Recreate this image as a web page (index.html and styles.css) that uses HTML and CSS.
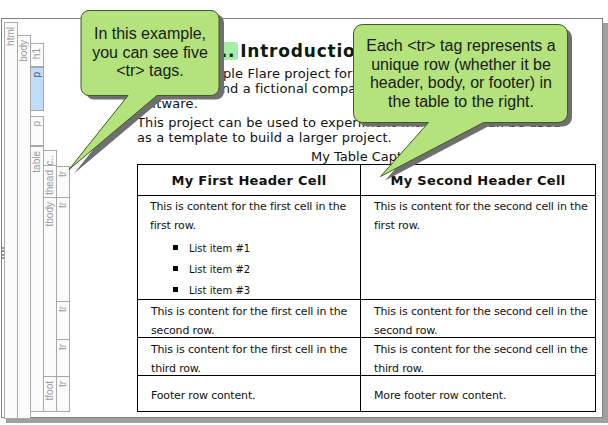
FILE: index.html
```html
<!DOCTYPE html>
<html lang="en">
<head>
    <meta charset="UTF-8" />
    <meta name="viewport" content="width=device-width, initial-scale=1.0" />
    <title>Table row tags</title>
    <link rel="stylesheet" href="styles.css">
</head>
<body>
    <div class="window">
        <div class="grip"></div>
        <div class="structure">
            <div class="bar b-html"><span>html</span></div>
            <div class="bar b-body"><span>body</span></div>
            <div class="bar b-h1"><span>h1</span></div>
            <div class="bar b-p1"><span>p</span></div>
            <div class="bar b-p2"><span>p</span></div>
            <div class="bar b-table"><span>table</span></div>
            <div class="bar b-cap"><span>c..</span></div>
            <div class="bar b-thead"><span>thead</span></div>
            <div class="bar b-tbody"><span>tbody</span></div>
            <div class="bar b-tfoot"><span>tfoot</span></div>
            <div class="bar b-tr1"><span>tr</span></div>
            <div class="bar b-tr2"><span>tr</span></div>
            <div class="bar b-tr3"><span>tr</span></div>
            <div class="bar b-tr4"><span>tr</span></div>
            <div class="bar b-tr5"><span>tr</span></div>
        </div>
        <div class="content">
            <h1><span class="num">1..</span>Introduction</h1>
            <p>This is a sample Flare project for the documentation<br>using Flare and a fictional company that sells<br>software.</p>
            <p>This project can be used to experiment with it, or it can be used<br>as a template to build a larger project.</p>
            <table>
                <caption>My Table Caption</caption>
                <thead>
                    <tr class="row-head"><th>My First Header Cell</th><th>My Second Header Cell</th></tr>
                </thead>
                <tbody>
                    <tr class="row-list">
                        <td>
                            This is content for the first cell in the first row.
                            <ul>
                                <li>List item #1</li>
                                <li>List item #2</li>
                                <li>List item #3</li>
                            </ul>
                        </td>
                        <td>This is content for the second cell in the first row.</td>
                    </tr>
                    <tr class="row-text">
                        <td><div class="cell-text">This is content for the first cell in the second row.</div></td>
                        <td><div class="cell-text">This is content for the second cell in the second row.</div></td>
                    </tr>
                    <tr class="row-text">
                        <td><div class="cell-text">This is content for the first cell in the third row.</div></td>
                        <td><div class="cell-text">This is content for the second cell in the third row.</div></td>
                    </tr>
                </tbody>
                <tfoot>
                    <tr class="row-foot"><td>Footer row content.</td><td>More footer row content.</td></tr>
                </tfoot>
            </table>
        </div>
    </div>

    <div class="callout callout-left">
        <svg width="170" height="172" viewBox="0 0 170 172">
            <path class="shade" d="M8 0H130a8 8 0 0 1 8 8V77a8 8 0 0 1-8 8H76L-12 159L47 85H8a8 8 0 0 1-8-8V8a8 8 0 0 1 8-8z" transform="translate(17 4.5)"/>
            <path class="balloon" d="M8 0H130a8 8 0 0 1 8 8V77a8 8 0 0 1-8 8H76L-12 159L47 85H8a8 8 0 0 1-8-8V8a8 8 0 0 1 8-8z" transform="translate(12 0.5)"/>
        </svg>
        <p>In this example, you can see five &lt;tr&gt; tags.</p>
    </div>

    <div class="callout callout-right">
        <svg width="224" height="160" viewBox="0 0 224 160">
            <path class="shade" d="M9 0H205a9 9 0 0 1 9 9V89a9 9 0 0 1-9 9H130L27 152L75 98H9a9 9 0 0 1-9-9V9a9 9 0 0 1 9-9z" transform="translate(5 4.5)"/>
            <path class="balloon" d="M9 0H205a9 9 0 0 1 9 9V89a9 9 0 0 1-9 9H130L27 152L75 98H9a9 9 0 0 1-9-9V9a9 9 0 0 1 9-9z" transform="translate(0.5 0.5)"/>
        </svg>
        <p>Each &lt;tr&gt; tag represents a unique row (whether it be header, body, or footer) in the table to the right.</p>
    </div>
</body>
</html>
```

FILE: styles.css
```css
html, body { margin: 0; padding: 0; }
body { position: relative; width: 608px; height: 425px; overflow: hidden; background: #fff; font-family: "DejaVu Sans", Verdana, sans-serif; color: #000; }

.window { position: absolute; left: 1px; top: 18px; width: 602px; height: 400px; border: 1px solid #808080; background: #fff; box-shadow: 5px 5px 0 #a0a0a0; display: flex; box-sizing: border-box; }
.grip { position: absolute; left: 0; top: 228px; width: 2px; height: 12px; border-left: 2px dotted #999; }

/* structure bars: each one sits where its element sits on the page */
.structure { position: relative; width: 122px; flex: none; }
.bar { position: absolute; box-sizing: border-box; width: 14px; border: 1px solid #a8a8a8; background: #fbfbfb; color: #9a9a9a; font-family: "Liberation Sans", Arial, sans-serif; font-size: 10px; }
.bar span { position: absolute; left: 0; top: 4px; writing-mode: vertical-rl; transform: rotate(180deg); line-height: 12px; }
.b-html { left: 2px; top: 3px; height: 397px; }
.b-body { left: 15px; top: 16px; height: 384px; }
.b-h1 { left: 28px; top: 24px; height: 24px; }
.b-p1 { left: 28px; top: 48px; height: 44px; background: #bfdcfb; color: #555; }
.b-p2 { left: 28px; top: 97px; height: 30px; }
.b-table { left: 28px; top: 127px; height: 266px; }
.b-cap { left: 41px; top: 131px; height: 16px; }
.b-thead { left: 41px; top: 146px; height: 33px; }
.b-tbody { left: 41px; top: 178px; height: 180px; }
.b-tfoot { left: 41px; top: 357px; height: 36px; }
.b-tr1 { left: 54px; top: 147px; height: 32px; }
.b-tr2 { left: 54px; top: 178px; height: 105px; }
.b-tr3 { left: 54px; top: 282px; height: 39px; }
.b-tr4 { left: 54px; top: 320px; height: 38px; }
.b-tr5 { left: 54px; top: 357px; height: 36px; }

.content { flex: 1; padding-top: 19px; padding-left: 13px; font-size: 13px; line-height: 15px; color: #111; letter-spacing: 0.1px; }
.content h1 { margin: 0 0 2px; font-size: 17px; line-height: 26px; font-weight: bold; padding-left: 71px; color: #0c1c0c; letter-spacing: 0.8px; }
.num { display: inline-block; line-height: 18px; background: #a5eca5; border-radius: 3px; padding-right: 3px; margin-right: 2px; }
.content p { margin: 0 0 4px; }

table { border-collapse: collapse; table-layout: fixed; width: 459px; font-size: 11px; line-height: 19px; letter-spacing: -0.17px; }
caption { font-size: 13px; line-height: 15px; letter-spacing: 0; }
th { font-size: 13px; font-weight: bold; height: 29px; padding: 1px 0 0; letter-spacing: 0.3px; }
th, td { border: 1px solid #000; }
th:first-child, td:first-child { width: 222px; }
td { vertical-align: top; padding: 0 2px 0 13px; }
.row-list td { height: 102px; padding-top: 1px; }
.row-list td:first-child { padding-left: 12px; }
.row-text td { height: 37px; }
.cell-text { margin: 2px 0 -3px; }
.row-foot td { height: 32px; padding-top: 3px; vertical-align: middle; }
ul { margin: 3px 0 -4px; padding: 0 0 0 23px; list-style: none; font-size: 10px; line-height: 21px; letter-spacing: 0; }
li { display: flex; align-items: center; gap: 11px; }
li::before { content: ""; width: 5px; height: 5px; background: #000; margin-top: -3px; }

.callout { position: absolute; }
.callout svg { display: block; overflow: visible; }
.callout p { position: absolute; margin: 0; text-align: center; font-family: "Liberation Sans", Arial, sans-serif; font-size: 16px; line-height: 18.7px; color: #1a1a1a; }
.shade { fill: #6f6f6f; }
.balloon { fill: #b4e27c; stroke: #3d5c22; stroke-width: 1; }
.callout-left { left: 69px; top: 10px; }
.callout-left p { left: 16px; top: 15px; width: 130px; }
.callout-right { left: 353px; top: 24px; }
.callout-right p { left: 10px; top: 13px; width: 196px; }
```
